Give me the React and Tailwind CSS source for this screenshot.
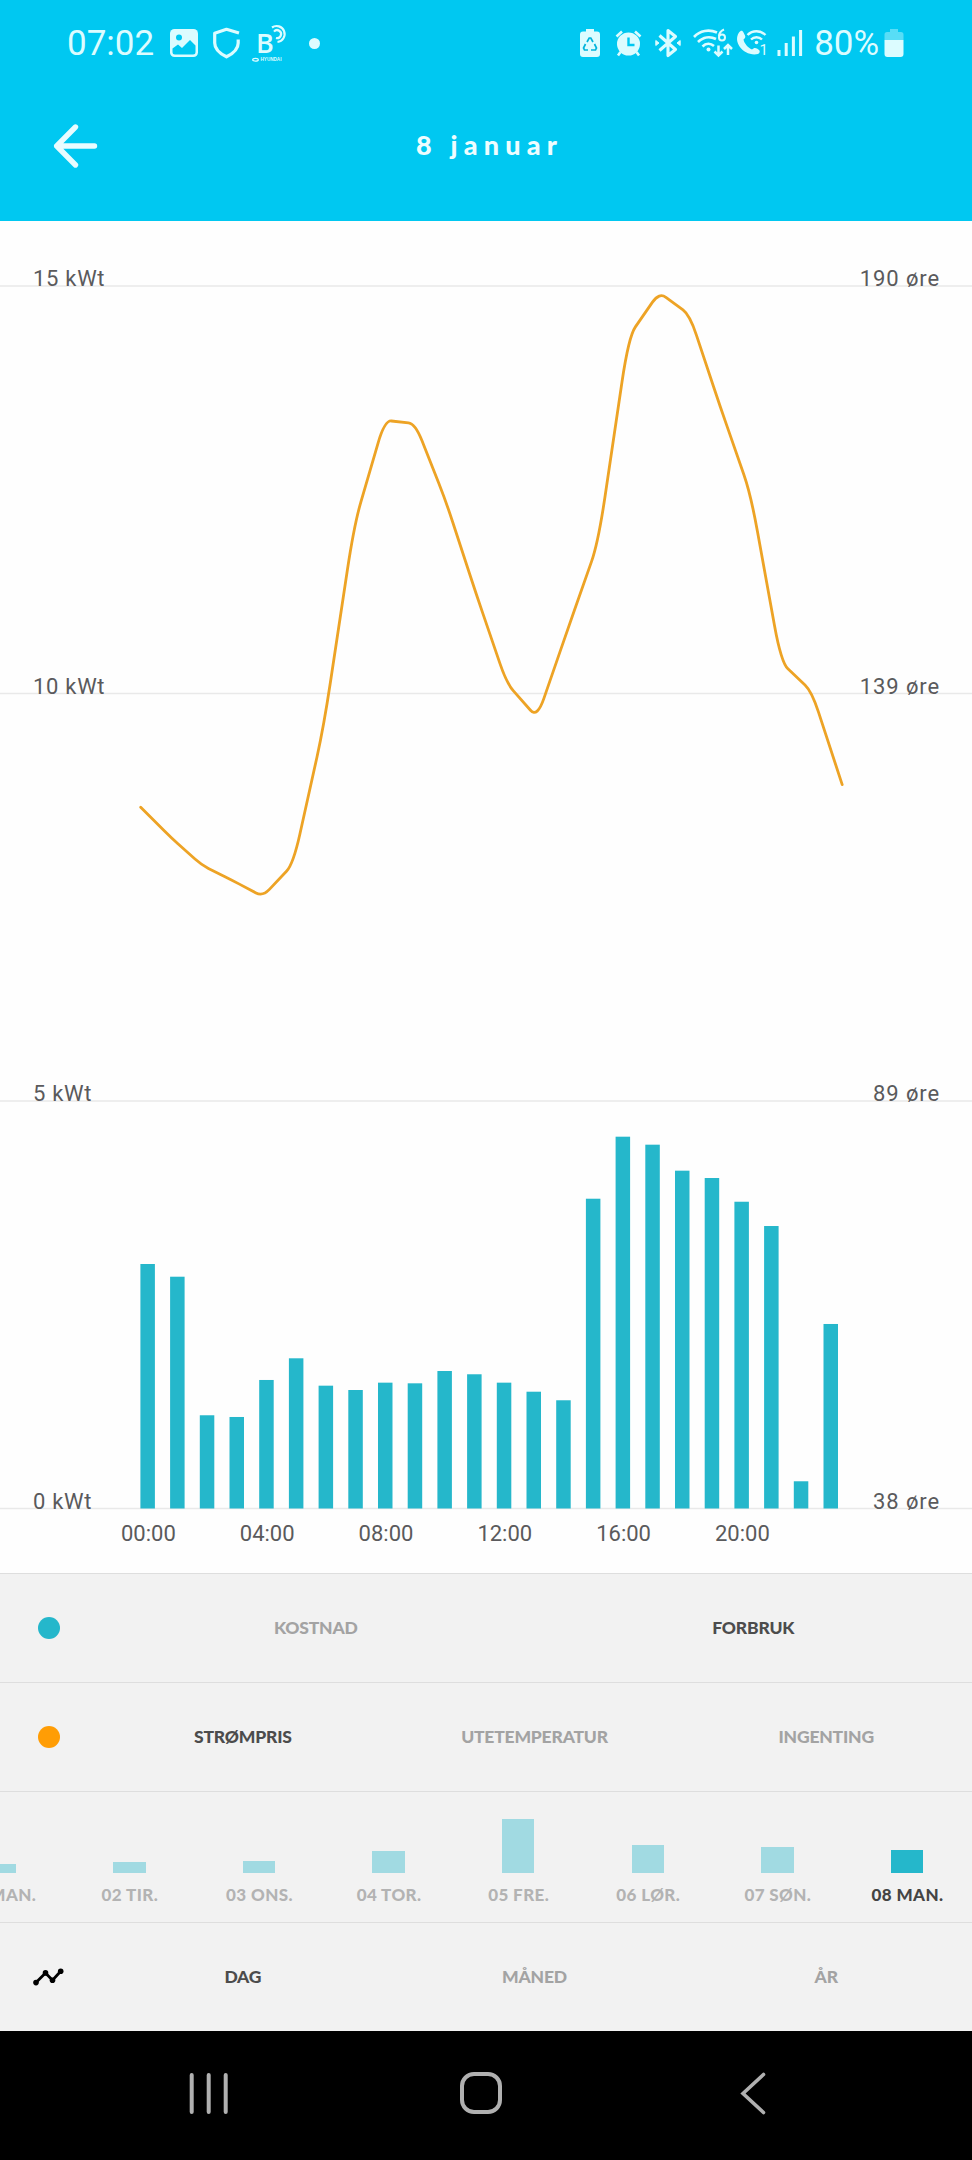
import clsx from 'clsx';

const CHART = { width: 972, height: 1352, base: 1287.5, step: 407.5 };

const consumption = [
    3.0, 2.844, 1.144, 1.123, 1.577, 1.843, 1.507, 1.454, 1.544, 1.536, 1.687, 1.647,
    1.544, 1.433, 1.328, 3.801, 4.562, 4.464, 4.145, 4.055, 3.764, 3.466, 0.334, 2.264
];

const prices = [
    125.2, 121.4, 118.0, 116.1, 114.1, 118.1, 135.2, 160.3, 173.3, 172.9, 163.3, 151.7,
    140.6, 136.3, 147.3, 158.1, 183.7, 189.2, 186.4, 175.0, 164.1, 143.2, 139.6, 128.0
];

const gridLines = [
    { kwh: 15, ore: 190 },
    { kwh: 10, ore: 139 },
    { kwh: 5, ore: 89 },
    { kwh: 0, ore: 38 }
];

const hours = ['00:00', '04:00', '08:00', '12:00', '16:00', '20:00'];

const days = [
    { label: '01 MAN.', height: 9 },
    { label: '02 TIR.', height: 11 },
    { label: '03 ONS.', height: 12 },
    { label: '04 TOR.', height: 22 },
    { label: '05 FRE.', height: 54 },
    { label: '06 LØR.', height: 28 },
    { label: '07 SØN.', height: 26 },
    { label: '08 MAN.', height: 23, active: true }
];

// Straight segments with rounded corners
function roundedPath(points, t = 0.22) {
    const mix = (a, b) => `${a[0] + (b[0] - a[0]) * t} ${a[1] + (b[1] - a[1]) * t}`;
    const last = points[points.length - 1];
    const corners = points.slice(1, -1).map((p, i) => (
        `L${mix(p, points[i])} Q${p[0]} ${p[1]} ${mix(p, points[i + 2])}`
    ));
    return `M${points[0][0]} ${points[0][1]} ${corners.join(' ')} L${last[0]} ${last[1]}`;
}

function StatusBar() {
    return (
        <div className="flex h-[86px] items-center pl-[67px] text-[#dcfcff]">
            <span className="pt-px font-['Roboto',sans-serif] text-[35px] leading-none">07:02</span>

            {/* Image */}
            <svg className="ml-4 h-7 w-7" viewBox="0 0 28 28">
                <rect width="28" height="28" rx="4.5" fill="currentColor" />
                <circle cx="9" cy="8.500" r="3" fill="#00c8f1" />
                <path d="M2.500 19.500 8 15.500l4 3.500 8-8 5.500 5.500V23a2.500 2.500 0 0 1-2.500 2.500H5A2.500 2.500 0 0 1 2.500 23Z" fill="#00c8f1" />
            </svg>

            {/* Shield */}
            <svg className="ml-[15px] h-[32px] w-[27px]" viewBox="0 0 27 32" fill="none" stroke="currentColor" strokeWidth="3.200">
                <path d="M26 6 13.500 2.300 1.700 6.200V16c0 6.500 5 10.500 11.800 13.800C20.300 26.500 25.200 22.500 25.200 16v-3.500" strokeLinejoin="round" />
            </svg>

            {/* Bluelink */}
            <svg className="ml-[12px] h-10 w-9" viewBox="0 0 36 40" fill="none" stroke="currentColor">
                <text x="4" y="30" className="font-['Open_Sans',sans-serif] text-[27px] font-semibold" fill="currentColor" stroke="none">B</text>
                <path d="M20 4.500A8 8 0 1 1 25.500 19" strokeWidth="2.200" />
                <path d="M22 8.600A4 4 0 1 1 24 15" strokeWidth="2.200" />
                <ellipse cx="3.500" cy="36.700" rx="2.800" ry="1.400" strokeWidth="1.300" />
                <text x="8.500" y="38.300" className="font-['Liberation_Sans',sans-serif] text-[4.600px] font-bold" fill="currentColor" stroke="none">HYUNDAI</text>
            </svg>

            <span className="ml-[21px] h-[11px] w-[11px] rounded-full bg-current" />

            {/* Recycle battery */}
            <svg className="ml-[260px] h-7 w-5" viewBox="0 0 20 28">
                <path d="M6 0h8v2.500h3A3 3 0 0 1 20 5.500V25a3 3 0 0 1-3 3H3a3 3 0 0 1-3-3V5.500a3 3 0 0 1 3-3h3Z" fill="currentColor" />
                <path d="m7 13 2.200-4h1.600l2.200 4M14.500 15l2 4-1 2h-4.500M5.500 15l-2 4 1 2H8" fill="none" stroke="#00b4dc" strokeWidth="1.700" />
            </svg>

            {/* Alarm */}
            <svg className="ml-[15px] h-[27px] w-[27px]" viewBox="0 0 27 27">
                <circle cx="13.500" cy="14" r="11.500" fill="currentColor" />
                <path d="M1.500 6.500 7 1.500M25.500 6.500 20 1.500M5.500 22l-2.500 3.500M21.500 22l2.500 3.500" stroke="currentColor" strokeWidth="2.600" />
                <path d="M13.500 7.500V15h6" fill="none" stroke="#00c8f1" strokeWidth="2.400" />
            </svg>

            {/* Bluetooth */}
            <svg className="ml-[13px] h-[30px] w-[26px]" viewBox="0 0 26 30" fill="none" stroke="currentColor" strokeWidth="3.100" strokeLinejoin="round">
                <path d="M4.500 7.500 20.500 21.500 13 27.500v-25l7.500 6L4.500 22.500" />
                <path d="M.8 12.500 4 15 .8 17.500ZM25.200 12.500 22 15l3.200 2.500Z" fill="currentColor" strokeWidth="1" />
            </svg>

            {/* Wifi 6 */}
            <svg className="ml-[12px] h-[30px] w-[40px]" viewBox="0 0 40 30" fill="none" stroke="currentColor" strokeWidth="2.600">
                <path d="M1 9C7 2.500 16 1 24 4.500M5 14c5-5 12-6 18-3M9.500 18.500c3.500-3.500 8-3.500 11.500-.5" />
                <circle cx="15.500" cy="21.500" r="2" fill="currentColor" stroke="none" />
                <path d="M31 1.500c-3.500 1.500-5 4-5 7" strokeWidth="2" />
                <circle cx="29" cy="9.500" r="3" strokeWidth="2" />
                <path d="M25.500 17.500V27.500M21.500 23.500l4 4 4-4M35 27v-9.500M31 21l4-4 4 4" strokeWidth="2.500" />
            </svg>

            {/* Wifi call */}
            <svg className="ml-[3px] h-[28px] w-[35px] overflow-visible" viewBox="0 0 35 28" fill="none" stroke="currentColor" strokeWidth="2.400">
                <path d="M3 3.500c2-2.500 3.500-2 4.500 0l1.500 3c1 2-.5 3-1.500 4 1 4.500 4.500 8 8.500 10 1.500-1.500 3-2 5-1l2 1.500c1.500 1.500.5 3-1 4C9 28-4 14 3 3.500Z" fill="currentColor" stroke="none" />
                <path d="M11.500 6c5-5 13-5 18 0M15 10.500c3-3 8-3 11 0" />
                <circle cx="20.500" cy="13.500" r="1.800" fill="currentColor" stroke="none" />
                <text x="23.500" y="26" className="font-['Roboto',sans-serif] text-[15px]" fill="currentColor" stroke="none">1</text>
            </svg>

            {/* Signal */}
            <svg className="ml-[6px] h-[28px] w-[26px]" viewBox="0 0 26 28" stroke="currentColor" strokeWidth="3">
                <path d="M2 27v-6M9.200 27V14M16.400 27V7.500M23.600 27V1" />
            </svg>

            <span className="ml-[11px] pt-px font-['Roboto',sans-serif] text-[35px] leading-none">80%</span>

            {/* Battery */}
            <svg className="ml-[5px] h-[28px] w-[20px]" viewBox="0 0 20 28" fill="currentColor">
                <path d="M6 0h8v3h3A2.500 2.500 0 0 1 19.500 5.500V11H.5V5.500A2.500 2.500 0 0 1 3 3h3Z" opacity=".4" />
                <path d="M.5 11h19v14a3 3 0 0 1-3 3h-13a3 3 0 0 1-3-3Z" />
            </svg>
        </div>
    );
}

function Header() {
    return (
        <header className="h-[221px] bg-[#00c8f1]">
            <StatusBar />
            <div className="flex h-[120px] items-center px-[52px]">
                <svg className="h-12 w-12" viewBox="0 0 48 48" fill="none" stroke="#e8fcff" strokeWidth="5.400" strokeLinecap="round" strokeLinejoin="round">
                    <path d="M23.500 5 4.700 24l18.800 19M4.700 24h37.800" />
                </svg>
                <h1 className="flex-1 pb-px pr-[41px] text-center font-['Lato',sans-serif] text-[27px] font-black tracking-[6.200px] text-[#eefdff]">
                    8 januar
                </h1>
            </div>
        </header>
    );
}

function UsageChart() {
    const points = prices.map((price, i) => [140.7 + i * 30.5, CHART.base - (price - 38) * 8.043]);

    return (
        <svg
            className="block h-[1352px] w-[972px] bg-[#fefefe] font-['Roboto',sans-serif] text-[22px]"
            viewBox={`0 0 ${CHART.width} ${CHART.height}`}
        >
            {gridLines.map((line, i) => {
                const y = 65 + i * CHART.step;
                return (
                    <g key={line.kwh} fill="#5a5a5c">
                        <line x1="0" x2="972" y1={y} y2={y} stroke="#e9e9e9" strokeWidth="1.5" />
                        <text x="33" y={y} className="tracking-[0.7px]">{line.kwh} kWt</text>
                        <text x="940" y={y} textAnchor="end" className="tracking-[0.9px]">{line.ore} øre</text>
                    </g>
                );
            })}
            {consumption.map((kwh, i) => (
                <rect
                    key={i}
                    x={140.4 + i * 29.7}
                    y={CHART.base - kwh * 81.5}
                    width="14.5"
                    height={kwh * 81.5}
                    fill="#25b7cb"
                />
            ))}
            <path d={roundedPath(points)} fill="none" stroke="#eda325" strokeWidth="2.8" strokeLinecap="round" />
            {hours.map((hour, i) => (
                <text key={hour} x={148.4 + i * 118.8} y="1320" textAnchor="middle" fill="#5a5a5c">{hour}</text>
            ))}
        </svg>
    );
}

function OptionRow({ icon, options, active }) {
    return (
        <div className="flex h-[109px] items-center border-t border-[#dedede]">
            <div className="flex w-[97px] justify-center">{icon}</div>
            {options.map((option) => (
                <button
                    key={option}
                    className={clsx(
                        "flex-1 pt-px text-center font-['Lato',sans-serif] text-[17.5px] font-black tracking-[-0.2px]",
                        option === active ? 'text-[#4c4c4c]' : 'text-[#a3a3a3]'
                    )}
                >
                    {option}
                </button>
            ))}
        </div>
    );
}

function DayPicker() {
    return (
        <div className="h-[131px] overflow-hidden border-t border-[#dedede]">
            <div className="-ml-[65px] flex h-full w-[1037px] pb-[17px]">
                {days.map((day) => (
                    <div key={day.label} className="flex w-[129.6px] shrink-0 flex-col items-center justify-end">
                        <div
                            className={clsx('w-[32.5px]', day.active ? 'bg-[#25b7cb]' : 'bg-[#a1dae2]')}
                            style={{ height: day.height }}
                        />
                        <span
                            className={clsx(
                                "mt-[11px] pl-px font-['Lato',sans-serif] text-[17px] font-black leading-[21px] tracking-[0.4px]",
                                day.active ? 'text-[#444444]' : 'text-[#b3b3b3]'
                            )}
                        >
                            {day.label}
                        </span>
                    </div>
                ))}
            </div>
        </div>
    );
}

function NavBar() {
    return (
        <nav className="flex flex-1 items-center bg-black pb-[5px]">
            <svg className="ml-[187px] h-[44px] w-[44px]" viewBox="0 0 44 44" stroke="#b0b0b0" strokeWidth="4" strokeLinecap="round">
                <path d="M4.700 4v37M21.700 4v37M38.700 4v37" />
            </svg>
            <svg className="ml-[228px] h-[44px] w-[44px]" viewBox="0 0 44 44" fill="none" stroke="#b0b0b0" strokeWidth="4">
                <rect x="3" y="3" width="38" height="38" rx="12" />
            </svg>
            <svg className="ml-[235px] h-[44px] w-[30px]" viewBox="0 0 30 44" fill="none" stroke="#b0b0b0" strokeWidth="3.600">
                <path d="M25.500 3.500 5 22.500 25.500 41.500" strokeLinecap="round" />
            </svg>
        </nav>
    );
}

export default function App() {
    return (
        <div className="flex h-[2160px] w-[972px] flex-col overflow-hidden bg-[#f2f2f2]">
            <Header />
            <UsageChart />
            <OptionRow
                icon={<span className="h-[22px] w-[22px] rounded-full bg-[#25b7cb]" />}
                options={['KOSTNAD', 'FORBRUK']}
                active="FORBRUK"
            />
            <OptionRow
                icon={<span className="h-[22px] w-[22px] rounded-full bg-[#ff9d05]" />}
                options={['STRØMPRIS', 'UTETEMPERATUR', 'INGENTING']}
                active="STRØMPRIS"
            />
            <DayPicker />
            <OptionRow
                icon={
                    <svg className="h-[18px] w-[31px]" viewBox="0 0 31 18">
                        <path d="M3 14.600 12.500 5l7 7.300L27.700 3.300" fill="none" stroke="#000" strokeWidth="2.800" />
                        <circle cx="3" cy="14.600" r="2.800" />
                        <circle cx="12.500" cy="4.900" r="2.800" />
                        <circle cx="19.500" cy="12.200" r="2.800" />
                        <circle cx="27.700" cy="3.200" r="2.800" />
                    </svg>
                }
                options={['DAG', 'MÅNED', 'ÅR']}
                active="DAG"
            />
            <NavBar />
        </div>
    );
}
